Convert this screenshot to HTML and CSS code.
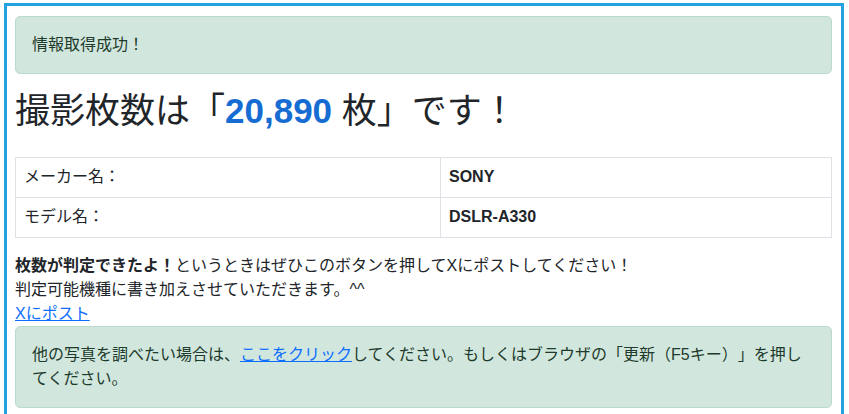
FILE: index.html
```html
<!DOCTYPE html>
<html lang="ja">
<head>
<meta charset="utf-8">
<title>撮影枚数</title>
<link rel="stylesheet" href="styles.css">
</head>
<body>
<div class="frame">
  <div class="alert">情報取得成功！</div>
  <h1 class="title">撮影枚数は「<span class="count">20,890</span> 枚」です！</h1>
  <table class="info">
    <colgroup><col class="col-label"><col></colgroup>
    <tr><td class="label">メーカー名：</td><td class="value">SONY</td></tr>
    <tr><td class="label">モデル名：</td><td class="value">DSLR-A330</td></tr>
  </table>
  <p class="note"><b>枚数が判定できたよ！</b>というときはぜひこのボタンを押してXにポストしてください！<br>判定可能機種に書き加えさせていただきます。^^<br><a href="#" class="link">Xにポスト</a></p>
  <div class="alert">他の写真を調べたい場合は、<a href="#" class="link">ここをクリック</a>してください。もしくはブラウザの「更新（F5キー）」を押してください。</div>
</div>
</body>
</html>
```
FILE: styles.css
```css
html, body {
  margin: 0;
  padding: 0;
  background: #fff;
}
body {
  font-family: "Liberation Sans", "Noto Sans CJK JP", sans-serif;
  font-size: 16px;
  line-height: 24px;
  color: #212529;
  text-spacing-trim: space-all;
}
.frame {
  margin: 3px 5px 0 4px;
  border: 3px solid #22a2df;
  border-bottom: none;
  padding: 10px 9px 0 8px;
  min-height: 420px;
  box-sizing: border-box;
}
.alert {
  background: #d1e7dd;
  border: 1px solid #badbcc;
  border-radius: 5px;
  padding: 16px;
  color: #1e3a2c;
}
.title {
  font-size: 35px;
  line-height: 42px;
  font-weight: 400;
  margin: 16px 0 25px;
  color: #212529;
}
.count {
  color: #166cd2;
  font-weight: 700;
}
.info {
  width: 100%;
  border-collapse: collapse;
  table-layout: fixed;
  margin-bottom: 16px;
}
.col-label {
  width: 425px;
}
.info td {
  border: 1px solid #dee2e6;
  padding: 7px 8px 8px;
  line-height: 24px;
}
.value {
  font-weight: 700;
}
.note {
  margin: 0;
}
.link {
  color: #0d6efd;
  text-decoration: underline;
}
```
